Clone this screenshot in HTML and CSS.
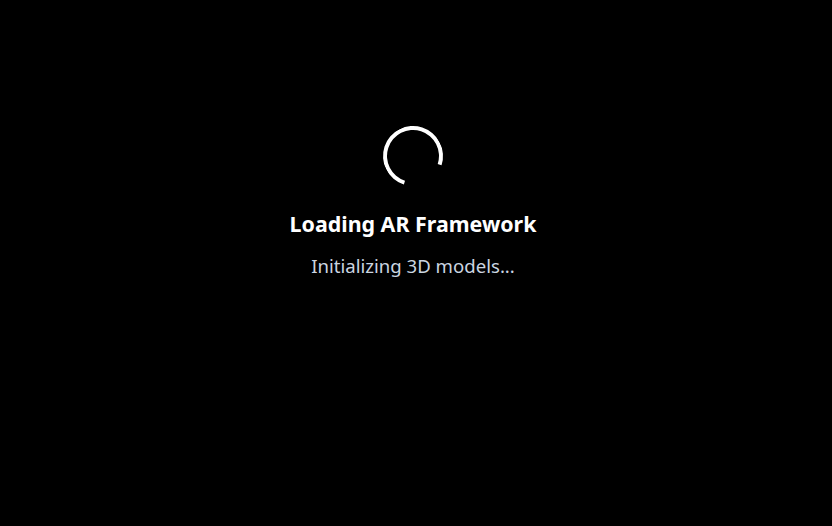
FILE: index.html
```html
<!DOCTYPE html>
<html lang="en">
<head>
<meta charset="utf-8">
<title>Loading AR Framework</title>
<link rel="stylesheet" href="styles.css">
</head>
<body>
<main class="loader">
  <div class="spinner"></div>
  <h1 class="title">Loading AR Framework</h1>
  <p class="subtitle">Initializing 3D models...</p>
</main>
</body>
</html>
```

FILE: styles.css
```css
html, body {
  margin: 0;
  padding: 0;
  background: #000;
  height: 100%;
}
.loader {
  display: flex;
  flex-direction: column;
  align-items: center;
  padding-top: 126px;
  padding-right: 6px;
  font-family: "Noto Sans", "Open Sans", sans-serif;
}
.spinner {
  width: 60px;
  height: 60px;
  box-sizing: border-box;
  border: 4px solid #fff;
  border-bottom-color: transparent;
  border-radius: 50%;
  transform: rotate(-27deg);
}
.title {
  margin: 24px 0 0;
  font-size: 21.4px;
  font-weight: 700;
  line-height: 28px;
  color: #fff;
}
.subtitle {
  margin: 16px 0 0;
  font-size: 18.6px;
  line-height: 24px;
  color: #cbd5e1;
}
```
